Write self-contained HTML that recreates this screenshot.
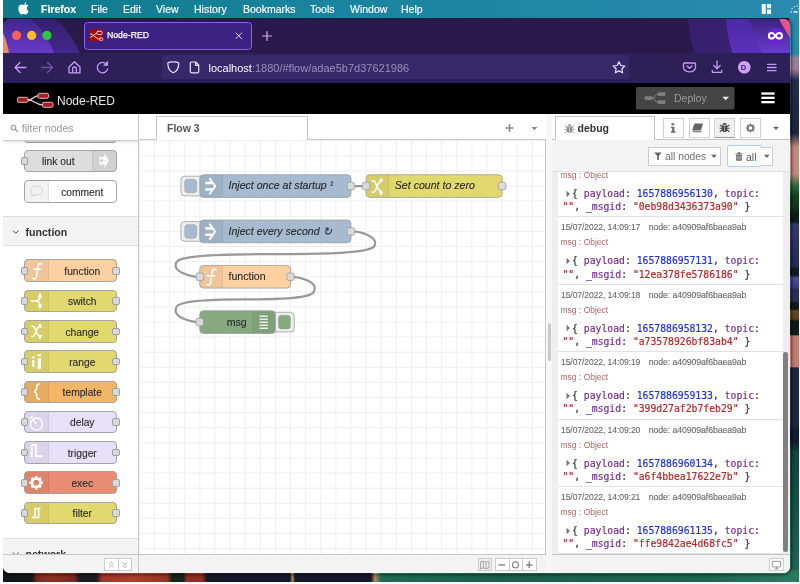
<!DOCTYPE html>
<html>
<head>
<meta charset="utf-8">
<title>Node-RED</title>
<style>
*{box-sizing:border-box;margin:0;padding:0}
html,body{width:800px;height:584px;overflow:hidden;background:#fff}
body{font-family:"Liberation Sans","Helvetica Neue",Arial,sans-serif;position:relative;color:#333}
.abs{position:absolute}
#desk{will-change:transform;position:absolute;left:3px;top:0;width:795.600px;height:581.500px;overflow:hidden;background:#14252b}
#menubar{position:absolute;left:0;top:0;width:796px;height:18.300px;background:linear-gradient(90deg,#0f798b 0%,#19849d 40%,#2288a7 75%,#2b8ab0 100%);color:#fff;font-size:10.500px;line-height:18px;-webkit-text-stroke:0.150px #fff;white-space:nowrap}
#menubar span{position:absolute;top:0}
#win{position:absolute;left:0;top:19px;width:786.800px;height:554.200px;border-radius:8px 6px 7px 7px;overflow:hidden;background:#fff}
#tabbar{position:absolute;left:0;top:0;width:787px;height:33.500px;background:#2a1a4b}
#navbar{position:absolute;left:0;top:33.500px;width:787px;height:31.500px;background:#2d1f57}
#urlbar{position:absolute;left:158.500px;top:2.500px;width:467px;height:24px;border-radius:3px;background:#37286a}
#nrhead{position:absolute;left:0;top:64.300px;width:787px;height:30.300px;background:#000}
#palette{position:absolute;left:0;top:94.600px;width:136px;height:440px;background:#fff;border-right:1px solid #c8c8c8;overflow:hidden}
.pnode{position:absolute;left:21px;width:92.500px;height:22.600px;border:1px solid #a3a3a3;border-radius:4px;font-size:10.250px;line-height:20.600px;text-align:center;color:#2c2c2c;-webkit-text-stroke:0.120px currentColor}
.pnode .ic{position:absolute;left:0;top:0;width:23.500px;height:20.600px;background:rgba(0,0,0,0.05);border-right:1px solid rgba(0,0,0,0.06);border-radius:3px 0 0 3px}
.pnode .icr{position:absolute;right:0;top:0;width:23.500px;height:20.600px;background:rgba(0,0,0,0.05);border-left:1px solid rgba(0,0,0,0.06);border-radius:0 3px 3px 0}
.pnode .lbl{position:absolute;left:24px;right:0;top:1.600px;text-align:center}
.pnode .pl,.pnode .pr{position:absolute;top:6.500px;width:7.600px;height:7.600px;border:1px solid #a0a0a0;border-radius:2px;background:#d9d9d9}
.pnode .pl{left:-4.500px}
.pnode .pr{right:-4.500px}
#chart{position:absolute;left:136px;top:121px;width:407px;height:413px;background:#fff;overflow:hidden}
#sidebar{position:absolute;left:549px;top:94px;width:238px;height:459px;background:#f3f3f3}
.dmsg{position:absolute;left:6px;width:225px;height:67.400px;background:#fff;border-bottom:1px solid #e2e2e2}
.dmeta{-webkit-text-stroke:0.100px currentColor;position:absolute;left:3px;top:5px;font-size:8.600px;color:#666;white-space:nowrap;letter-spacing:-0.1px}
.dname{position:absolute;left:2.500px;top:20px;font-size:8.500px;color:#a66;white-space:nowrap}
.dpay{position:absolute;left:4.400px;top:37px;font-family:"DejaVu Sans Mono","Liberation Mono",monospace;font-size:9.75px;line-height:13.2px;white-space:pre;color:#333;-webkit-text-stroke:0.200px currentColor}
.k{color:#792e90}.n{color:#2033d6}.s{color:#b72828}
.sbtn{top:4px;width:21px;height:20px;background:#fff;border:1px solid #d2d2d2}
</style>
</head>
<body>
<div id="desk">
<div id="rstrip" class="abs" style="left:786px;top:18px;width:10px;height:564px;background:linear-gradient(180deg,#2a8ba8 1.0px,#2a8ba8 36.0px,#9b8092 40.0px,#9b8092 51.0px,#252c52 62.0px,#1c2540 115.0px,#c08a78 129.0px,#c08a78 156.0px,#2a6a34 168.0px,#124020 178.0px,#0f3018 192.0px,#0c1c18 196.0px,#0c1c18 204.0px,#323a6e 206.0px,#242a54 248.0px,#0f1a22 251.0px,#0f1a22 257.0px,#4a4c98 260.0px,#3a3c80 269.0px,#2a2d5a 272.0px,#2a2d5a 283.0px,#0c1c14 285.0px,#0c1c14 291.0px,#6a4824 293.0px,#5a4020 301.0px,#0c1a18 303.0px,#0c1a18 316.5px,#c47a6c 318.0px,#c47a6c 348.5px,#1c2744 350.0px,#1c2744 406.0px,#101c30 412.0px,#101c30 424.0px,#134540 434.0px,#155045 482.0px,#22664f 555.0px,#2a7a60 564.0px)"></div>
<div id="bstrip" class="abs" style="left:0;top:570px;width:796px;height:12px;background:linear-gradient(90deg,#15151c 0.0px,#15151c 29.0px,#7a2a1e 34.0px,#8f3324 47.0px,#7a2a1e 71.0px,#1a1a20 77.0px,#1a1a20 93.0px,#a03826 99.0px,#ab3e2a 132.0px,#98351f 164.0px,#16241c 169.0px,#16241c 180.0px,#8f2e22 184.0px,#8f2e22 199.0px,#17172a 204.0px,#17172a 287.0px,#b08060 289.5px,#17172a 292.0px,#17172a 368.0px,#b08868 372.0px,#1f6b52 378.0px,#1c5f4b 497.0px,#1d6650 697.0px,#2a7a60 796.0px)"></div>
<div class="abs" style="left:-1px;top:18px;width:789px;height:555.500px;border-radius:8px;box-shadow:0 0 3px 1px rgba(0,0,0,0.55)"></div>
<div id="menubar">
<svg class="abs" style="left:0;top:0" width="797" height="19" viewBox="0 0 797 19">
<g fill="#fff">
<path d="M21.400 4.600 C21.300 3.500 22.200 2.500 23.200 2.300 C23.400 3.500 22.400 4.600 21.400 4.600 Z"/>
<path d="M23.900 8.100 C23.900 6.900 24.500 6.200 25.200 5.700 C24.600 4.900 23.700 4.600 22.900 4.600 C21.900 4.600 21.400 5.100 20.700 5.100 C20 5.100 19.300 4.600 18.500 4.600 C16.900 4.600 15.300 6 15.300 8.500 C15.300 11.200 17.100 14.400 18.600 14.400 C19.300 14.400 19.700 13.900 20.700 13.900 C21.700 13.900 21.900 14.400 22.800 14.400 C23.900 14.400 25 12.600 25.500 11.100 C24.500 10.700 23.900 9.500 23.900 8.100 Z"/>
<path d="M759.500 4 H762.700 V14 H759.500 Q758.700 14 758.700 13.200 V4.800 Q758.700 4 759.500 4 Z M763.900 4 H767.300 Q768.100 4 768.100 4.800 V8.300 H763.900 Z M763.900 9.500 H768.100 V13.200 Q768.100 14 767.300 14 H763.900 Z"/>
<g opacity="0.9"><rect x="788.500" y="8" width="1.200" height="1.200"/><rect x="790.800" y="6" width="1.200" height="1.200"/><rect x="793.500" y="5.500" width="1.200" height="1.200"/><rect x="795.500" y="8" width="1.200" height="1.200"/><rect x="787.500" y="11.200" width="1.200" height="1.500"/><rect x="790.500" y="11.200" width="4" height="1.500"/><rect x="795.800" y="11.200" width="1.200" height="1.500"/></g>
</g>
</svg>
<span style="left:38px;font-weight:bold">Firefox</span>
<span style="left:88px">File</span>
<span style="left:120px">Edit</span>
<span style="left:153px">View</span>
<span style="left:191px">History</span>
<span style="left:240px">Bookmarks</span>
<span style="left:307px">Tools</span>
<span style="left:347px">Window</span>
<span style="left:398px">Help</span>
</div>
<div id="win">
<div id="tabbar">
<svg class="abs" style="left:0;top:0" width="787" height="34" viewBox="0 0 787 34">
<defs>
<linearGradient id="lg1" x1="0" y1="0" x2="0" y2="1"><stop offset="0" stop-color="#40268a"/><stop offset="1" stop-color="#6a3aca"/></linearGradient>
<linearGradient id="lg2" x1="0" y1="0" x2="0" y2="1"><stop offset="0" stop-color="#34206c"/><stop offset="1" stop-color="#42288c"/></linearGradient>
<linearGradient id="lg3" x1="0" y1="0" x2="0" y2="1"><stop offset="0" stop-color="#4c2aa8"/><stop offset="1" stop-color="#5b31bb"/></linearGradient>
<linearGradient id="lg4" x1="0" y1="0" x2="0" y2="1"><stop offset="0" stop-color="#3c2380"/><stop offset="1" stop-color="#6c3ad0"/></linearGradient>
</defs>
<rect width="787" height="34" fill="#2a1a4c"/>
<path d="M0 0 H52 C62 8 72 22 77 34 H0 Z" fill="url(#lg2)"/>
<path d="M0 0 H28 C36 8 46 20 51 34 H0 Z" fill="url(#lg1)"/>
<path d="M0 14 C3 20 5 28 6 34 H0 Z" fill="#f08a6a"/>
<path d="M685 0 C686 12 688 24 691.500 34 H787 V0 Z" fill="#37206f"/>
<path d="M723 0 C724 12 726 24 729.600 34 H787 V0 Z" fill="url(#lg3)"/>
<path d="M746 0 C749 12 754 24 759.700 34 H787 V0 Z" fill="url(#lg4)"/>
<path d="M776 0 H787 V19 C783 12 779 6 776 0 Z" fill="#ee4f8d"/>
<circle cx="13.600" cy="16.400" r="4.600" fill="#fe5f57"/>
<circle cx="28.700" cy="16.400" r="4.600" fill="#febc2e"/>
<circle cx="43.900" cy="16.400" r="4.600" fill="#28c840"/>
<rect x="81.5" y="3.5" width="167" height="27" rx="3" fill="#3c2183" stroke="#8e5fe6" stroke-width="1"/>
<rect x="86.800" y="10.250" width="12.600" height="12" fill="#a80a0a"/>
<g stroke="#f3dada" stroke-width="1" fill="none" stroke-linecap="round">
<path d="M87.500 14.800 C90.500 15.500 92 18.500 95 19.700 L96.500 20.200 M87.500 18.300 C90.500 17.600 91.500 14.600 94 14"/>
<rect x="94" y="12.300" width="5" height="3.300" rx="1" fill="#a80a0a" stroke-width="0.900"/><rect x="96.500" y="19" width="3.200" height="2.400" rx="0.800" fill="#a80a0a" stroke-width="0.800"/>
</g>
<g stroke="#e6d9fb" stroke-width="1" stroke-linecap="round"><path d="M233 14 L238.5 19.5 M238.5 14 L233 19.5"/></g>
<g stroke="#d3a8f8" stroke-width="1.2" stroke-linecap="round"><path d="M259.5 17 H268.5 M264 12.5 V21.5"/></g>
<circle cx="772.400" cy="16.800" r="8" fill="#6e20dc"/>
<path d="M772.5 16.500 C771 14.300 769.800 13.700 768.700 13.700 C767.100 13.700 766 14.900 766 16.500 C766 18.100 767.100 19.300 768.700 19.300 C769.800 19.300 771 18.700 772.500 16.500 C774 14.300 775.200 13.700 776.300 13.700 C777.900 13.700 779 14.900 779 16.500 C779 18.100 777.900 19.300 776.300 19.300 C775.200 19.300 774 18.700 772.500 16.500 Z" fill="none" stroke="#fff" stroke-width="2.100" transform="translate(-0.1,0.3)"/>
</svg>
<div class="abs" style="left:104px;top:10px;font-size:8.700px;-webkit-text-stroke:0.250px #fff;line-height:13px;color:#fff;white-space:nowrap">Node-RED</div>
</div>
<div id="navbar"><div id="urlbar"></div>
<svg class="abs" style="left:0;top:-0.800px" width="787" height="31" viewBox="0 0 787 31" fill="none" stroke-linecap="round" stroke-linejoin="round">
<g stroke="#c79bf5" stroke-width="1.3">
<path d="M23 15.500 H12.500 M17 10.500 L12 15.500 L17 20.500"/>
<path d="M38.500 15.500 H49 M44.500 10.500 L49.500 15.500 L44.500 20.500" stroke="#6f55a8"/>
<path d="M66 15 L71.500 9.800 L77 15 V20.800 H66 Z M69.700 20.800 V16.300 Q69.700 15 71.500 15 Q73.300 15 73.300 16.300 V20.800"/>
<path d="M103.800 12.600 A5.200 5.200 0 1 0 104.600 16.800"/>
<path d="M104.700 9.600 V13.400 H100.900 Z" fill="#c79bf5" stroke-width="0.8"/>
</g>
<g stroke="#ece4fb" stroke-width="1.2">
<path d="M170.300 10 C172 10 173.500 9.600 175.800 11 C175.800 16 174.500 19 170.300 20.800 C166.100 19 164.800 16 164.800 11 C167.100 9.600 168.600 10 170.300 10 Z"/>
<path d="M187.300 11.200 Q187.300 10 188.500 10 H192.700 L195.700 13 V19.600 Q195.700 20.800 194.500 20.800 H188.500 Q187.300 20.800 187.300 19.600 Z M192.500 10.200 V13.300 H195.500"/>
<path d="M616 9.800 L617.800 13.500 L621.800 14 L618.900 16.800 L619.600 20.800 L616 18.900 L612.400 20.800 L613.100 16.800 L610.200 14 L614.200 13.500 Z"/>
</g>
<g stroke="#c79bf5" stroke-width="1.3">
<path d="M681.500 11 H691.500 Q692.500 11 692.500 12 V15 Q692.500 19.800 686.500 19.800 Q680.500 19.800 680.500 15 V12 Q680.500 11 681.500 11 Z M684 14 L686.500 16.300 L689 14"/>
<path d="M714 9 V16.500 M710.800 13.500 L714 16.700 L717.200 13.500 M709.300 18.500 V20.300 H718.700 V18.500"/>
<path d="M764.500 12.300 H773 M764.500 15.500 H773 M764.500 18.700 H773"/>
</g>
<circle cx="741.300" cy="15.300" r="6.300" fill="#d29ff7"/>
</svg>
<div class="abs" style="left:737.700px;top:10.200px;font-size:7.500px;line-height:9px;font-weight:bold;color:#2d1f57">D</div>
<div class="abs" style="left:205.500px;top:9px;font-size:11px;line-height:13px;color:#fbfbfe;white-space:nowrap">localhost<span style="color:#9d90bd">:1880/#flow/adae5b7d37621986</span></div>
</div>
<div id="nrhead">
<svg class="abs" style="left:0;top:0" width="787" height="30" viewBox="0 0 787 30">
<g transform="translate(1,1.300)"><g fill="none" stroke="#e6d6d6" stroke-width="1.300">
<path d="M24 15.500 C30 15.500 29 11.500 34 11.500"/>
<path d="M24 15.500 C31 15.500 31 20.500 38.500 20.500"/>
</g>
<g fill="#a81e22" stroke="#ecc8c8" stroke-width="0.900">
<rect x="13.500" y="13" width="10.500" height="5" rx="1.500"/>
<rect x="34" y="9" width="10.500" height="5" rx="1.500"/>
<rect x="38.500" y="18" width="10.500" height="5" rx="1.500"/>
</g></g>
<rect x="633" y="4" width="98.500" height="22.500" rx="1.500" fill="#454545"/>
<g fill="#7d7d7d">
<rect x="641.500" y="13.300" width="8" height="3.600" rx="0.800"/>
<rect x="654.500" y="9.300" width="8" height="3.600" rx="0.800"/>
<rect x="654.500" y="17.300" width="8" height="3.600" rx="0.800"/>
</g>
<path d="M649.500 15.100 C653 15.100 651 11.100 654.500 11.100 M649.500 15.100 C653 15.100 651 19.100 654.500 19.100" fill="none" stroke="#7d7d7d" stroke-width="1"/>
<path d="M719.300 13.800 H726 L722.650 17.300 Z" fill="#eee"/>
<g fill="#fff"><rect x="758.300" y="9.400" width="13.300" height="2.300"/><rect x="758.300" y="13.700" width="13.300" height="2.300"/><rect x="758.300" y="18" width="13.300" height="2.300"/></g>
</svg>
<div class="abs" style="left:54px;top:9.300px;font-size:12px;line-height:16px;color:#e6e6e6;white-space:nowrap">Node-RED</div>
<div class="abs" style="left:671px;top:8px;font-size:10.500px;line-height:14px;color:#9a9a9a;white-space:nowrap">Deploy</div>
</div>
<!--PAL--><div id="palette">
<div class="pnode" style="top:6.4px;background:#ddd"></div>
<div class="pnode" style="top:36.1px;background:#ddd"><div class="icr"><svg width="22" height="20" viewBox="0 0 22 20" style="position:absolute;left:0;top:0.300px"><path d="M6.500 5.800 H11.400 V2.300 L16 9.600 L11.400 17 V13.400 H6.500 Z" fill="#fff" opacity="0.950"/><circle cx="8.600" cy="9.600" r="1.700" fill="#d2d2d2"/><path d="M10.300 9.600 H14" stroke="#d2d2d2" stroke-width="0.500"/></svg></div><div class="lbl" style="left:0;right:24px">link out</div><div class="pl"></div></div>
<div class="pnode" style="top:66.6px;background:#fff"><div class="ic"><svg width="22" height="20" viewBox="0 0 22 20" style="position:absolute;left:0;top:0.300px"><path d="M5.500 9.500 C5.500 6.500 8.500 5 11.500 5 C14.500 5 17.500 6.500 17.500 9.500 C17.500 12.500 14.500 14 11.500 14 C10.500 14 9.800 13.900 9.100 13.700 C8.500 14.800 7.500 15.500 6.200 15.700 C6.800 15 7.100 14 7 12.800 C6 12 5.500 10.800 5.500 9.500 Z" fill="none" stroke="#ccc" stroke-width="0.900"/></svg></div><div class="lbl">comment</div></div>
<div class="pnode" style="top:145.9px;background:#fdd0a2"><div class="ic"><svg width="22" height="20" viewBox="0 0 22 20" style="position:absolute;left:0;top:0.300px"><path d="M16.800 3.100 C14.500 1.700 13.300 2.900 13 5 L11.600 15.500 C11.200 18 9.800 18.600 7.500 17.400 M9.200 8.300 H15.400" fill="none" stroke="#fff" stroke-width="1.500" stroke-linecap="round"/></svg></div><div class="lbl">function</div><div class="pl"></div><div class="pr"></div></div>
<div class="pnode" style="top:176.18px;background:#e2d96e"><div class="ic"><svg width="22" height="20" viewBox="0 0 22 20" style="position:absolute;left:0;top:0.300px"><g fill="none" stroke="#fff" stroke-width="1.600"><path d="M6 10 H9.500 C12.500 10 15 8.500 15 5.300 M9.500 10 C12.500 10 15 11.500 15 14.500"/></g><path d="M12.600 6.200 L15 1.500 L17.400 6.200 Z M12.600 13.800 L15 18.500 L17.400 13.800 Z" fill="#fff"/></svg></div><div class="lbl">switch</div><div class="pl"></div><div class="pr"></div></div>
<div class="pnode" style="top:206.46px;background:#e2d96e"><div class="ic"><svg width="22" height="20" viewBox="0 0 22 20" style="position:absolute;left:0;top:0.300px"><g fill="none" stroke="#fff" stroke-width="1.500"><path d="M6.300 5.200 H7.500 C11.500 5.200 10.500 15 15 14.800 M6.300 15.400 H7.500 C11.500 15.400 10.500 5.500 15 5.800"/></g><path d="M12.600 6.500 L15 1.800 L17.400 6.500 Z M12.600 14.100 L15 18.800 L17.400 14.100 Z" fill="#fff"/></svg></div><div class="lbl">change</div><div class="pl"></div><div class="pr"></div></div>
<div class="pnode" style="top:236.74px;background:#e2d96e"><div class="ic"><svg width="22" height="20" viewBox="0 0 22 20" style="position:absolute;left:0;top:0.300px"><g fill="#fff"><rect x="7.200" y="4.500" width="2.300" height="2"/><rect x="7.200" y="8" width="2.300" height="7"/><rect x="12.700" y="2.200" width="3.200" height="2.300"/><rect x="12.700" y="6.300" width="3.200" height="10.500"/></g><path d="M9.500 4.500 L12.700 2.500 M9.500 15 L12.700 16.800" stroke="#fff" stroke-width="0.600" stroke-dasharray="1 1" opacity="0.800"/></svg></div><div class="lbl">range</div><div class="pl"></div><div class="pr"></div></div>
<div class="pnode" style="top:267.02px;background:#f3b567"><div class="ic"><svg width="22" height="20" viewBox="0 0 22 20" style="position:absolute;left:0;top:0.300px"><path d="M14.800 1.800 C12 1.800 11.700 3 11.700 5 C11.700 7.800 11.400 9 9 9.500 C11.400 10 11.700 11.200 11.700 14 C11.700 16 12 17.200 14.800 17.200" fill="none" stroke="#fff" stroke-width="1.600"/></svg></div><div class="lbl">template</div><div class="pl"></div><div class="pr"></div></div>
<div class="pnode" style="top:297.3px;background:#e6e0f8"><div class="ic"><svg width="22" height="20" viewBox="0 0 22 20" style="position:absolute;left:0;top:0.300px"><g fill="none" stroke="#fff" stroke-width="1.300" opacity="0.900"><circle cx="11.500" cy="12" r="6"/><path d="M11.500 12 L8 8 M5.300 6.300 L7.800 4" stroke-linecap="round"/></g></svg></div><div class="lbl">delay</div><div class="pl"></div><div class="pr"></div></div>
<div class="pnode" style="top:327.58px;background:#e6e0f8"><div class="ic"><svg width="22" height="20" viewBox="0 0 22 20" style="position:absolute;left:0;top:0.300px"><path d="M6.700 15.500 V3 H11 V14.300 H17.400" fill="none" stroke="#fff" stroke-width="1.900"/></svg></div><div class="lbl">trigger</div><div class="pl"></div><div class="pr"></div></div>
<div class="pnode" style="top:357.86px;background:#e88d71"><div class="ic"><svg width="22" height="20" viewBox="0 0 22 20" style="position:absolute;left:0;top:0.300px"><g><circle cx="11.200" cy="9.700" r="4.200" fill="none" stroke="#fff" stroke-width="2.700"/><g stroke="#fff" stroke-width="2.600"><path d="M11.200 3 V5.200 M11.200 14.200 V16.400 M4.500 9.700 H6.700 M15.700 9.700 H17.900 M6.460 4.960 L8 6.500 M14.400 12.900 L15.940 14.440 M6.460 14.440 L8 12.900 M14.400 6.500 L15.940 4.960"/></g></g></svg></div><div class="lbl">exec</div><div class="pl"></div><div class="pr"></div></div>
<div class="pnode" style="top:388.14px;background:#e2d96e"><div class="ic"><svg width="22" height="20" viewBox="0 0 22 20" style="position:absolute;left:0;top:0.300px"><path d="M6.800 14.500 H13.700 V5.500 H15.500 M13.700 5.500 H10 V14.500" fill="none" stroke="#fff" stroke-width="1.500"/></svg></div><div class="lbl">filter</div><div class="pl"></div><div class="pr"></div></div>
<div class="abs" style="left:0;top:102.4px;width:135px;height:30.500px;background:#f3f3f3;border-top:1px solid #ddd;border-bottom:1px solid #ddd"></div>
<svg class="abs" style="left:8px;top:114.4px" width="10" height="8" viewBox="0 0 10 8"><path d="M2 2.500 L4.800 5.300 L7.600 2.500" fill="none" stroke="#444" stroke-width="1"/></svg>
<div class="abs" style="left:22.500px;top:111.4px;font-size:10.600px;line-height:14px;font-weight:bold;color:#333">function</div>
<div class="abs" style="left:0;top:424.4px;width:135px;height:30.500px;background:#f3f3f3;border-top:1px solid #ddd;border-bottom:1px solid #ddd"></div>
<svg class="abs" style="left:8px;top:436.4px" width="10" height="8" viewBox="0 0 10 8"><path d="M2 2.500 L4.800 5.300 L7.600 2.500" fill="none" stroke="#444" stroke-width="1"/></svg>
<div class="abs" style="left:22.500px;top:433.4px;font-size:10.600px;line-height:14px;font-weight:bold;color:#333">network</div>
<div class="abs" style="left:0;top:0;width:135px;height:27px;background:#fff;border-bottom:1px solid #ccc;box-shadow:0 1px 3px rgba(0,0,0,0.15)"></div>
<svg class="abs" style="left:6.500px;top:10.200px" width="9" height="9" viewBox="0 0 9 9"><circle cx="3.500" cy="3.500" r="2.300" fill="none" stroke="#999" stroke-width="1.100"/><path d="M5.300 5.300 L7.600 7.600" stroke="#999" stroke-width="1.300" stroke-linecap="round"/></svg>
<div class="abs" style="left:18.800px;top:7.700px;font-size:10.600px;line-height:14px;color:#999">filter nodes</div>
</div>
<div id="palfoot" class="abs" style="left:0;top:534.600px;width:136px;height:21px;background:#f3f3f3;border-top:1px solid #c6c6c6;border-right:1px solid #c6c6c6">
<div class="abs" style="left:101.400px;top:3px;width:14.500px;height:13.800px;background:#fff;border:1px solid #ccc"></div>
<div class="abs" style="left:114.900px;top:3px;width:14.500px;height:13.800px;background:#fff;border:1px solid #ccc"></div>
<svg class="abs" style="left:101.400px;top:3px" width="28" height="14" viewBox="0 0 28 14"><g fill="none" stroke="#999" stroke-width="0.800"><path d="M5 6.500 L7.300 4.300 L9.600 6.500 M5 9.500 L7.300 7.300 L9.600 9.500 M18.500 4.500 L20.800 6.700 L23.100 4.500 M18.500 7.500 L20.800 9.700 L23.100 7.500"/></g></svg>
</div>
<!--/PAL-->
<div id="ws" class="abs" style="left:136px;top:94.600px;width:407px;height:459px;background:#fff">
<div class="abs" style="left:0;top:0;width:407px;height:26.400px;background:#fff;border-bottom:1px solid #c6c6c6"></div>
<div class="abs" style="left:17.300px;top:2px;width:152px;height:24.400px;background:#fff;border:1px solid #c6c6c6;border-bottom:none"></div>
<div class="abs" style="left:28px;top:7.500px;font-size:10.500px;line-height:14px;font-weight:bold;color:#555;white-space:nowrap">Flow 3</div>
<svg class="abs" style="left:360px;top:5px" width="45" height="18" viewBox="0 0 45 18"><path d="M6.500 9 H14.500 M10.500 5 V13" stroke="#888" stroke-width="1.500"/><path d="M32.500 8 H38.500 L35.500 11.200 Z" fill="#888"/></svg>
<div id="chart" class="abs" style="left:0;top:26.400px;width:406px;height:414px;overflow:hidden;background-color:#fff;background-image:linear-gradient(90deg,#eee 1px,transparent 1px),linear-gradient(180deg,#eee 1px,transparent 1px);background-size:15.120px 15.120px;background-position:0px 0.200px">
<!--CH--><svg class="abs" style="left:0;top:0" width="406" height="413" viewBox="0 0 406 413" font-family="'Liberation Sans',Arial,sans-serif"><g transform="translate(0.300,0.700) scale(0.756)"><path d="M 280 60 C 290 60 290 60 300 60" fill="none" stroke="#fff" stroke-opacity="0.4" stroke-width="5"/><path d="M 280 60 C 290 60 290 60 300 60" fill="none" stroke="#999" stroke-width="3" stroke-linecap="round"/><path d="M 280 120 C 296 120 312 127.500 312 135 S 312 150 180 150 S 48 157.500 48 165 S 64 180 80 180" fill="none" stroke="#fff" stroke-opacity="0.4" stroke-width="5"/><path d="M 280 120 C 296 120 312 127.500 312 135 S 312 150 180 150 S 48 157.500 48 165 S 64 180 80 180" fill="none" stroke="#999" stroke-width="3" stroke-linecap="round"/><path d="M 200 180 C 216 180 232 187.500 232 195 S 232 210 140 210 S 48 217.500 48 225 S 64 240 80 240" fill="none" stroke="#fff" stroke-opacity="0.4" stroke-width="5"/><path d="M 200 180 C 216 180 232 187.500 232 195 S 232 210 140 210 S 48 217.500 48 225 S 64 240 80 240" fill="none" stroke="#999" stroke-width="3" stroke-linecap="round"/><g transform="translate(80.0,45)"><g transform="translate(-25,2)"><rect width="32" height="26" rx="5" ry="5" fill="#eee" stroke="#999"/><rect x="5" y="4" width="16" height="18" rx="4" ry="4" fill="#a6bbcf" stroke="#999" stroke-opacity="0.6"/></g><rect width="200" height="30" rx="5" ry="5" fill="#a6bbcf" stroke="#999" stroke-width="1"/><path d="M30 0.500 H5 Q0.500 0.500 0.500 5 V25 Q0.500 29.500 5 29.500 H30 Z" fill="rgba(0,0,0,0.05)"/><path d="M30 1 V29" stroke="rgba(0,0,0,0.1)"/><path d="M12.700 4.500 L20.300 15.200 L12.700 25.900" fill="none" stroke="#fff" stroke-width="2.600" stroke-linejoin="miter"/><g fill="#fff"><rect x="7.300" y="9.300" width="9" height="3.400"/><rect x="7.300" y="17.700" width="9" height="3.400"/></g><text x="38" y="19.500" font-size="14" fill="#2a2a2a" stroke="#2a2a2a" stroke-width="0.150" font-style="italic">Inject once at startup ¹</text><rect x="195" y="10" width="10" height="10" rx="3" ry="3" fill="#d9d9d9" stroke="#999" stroke-width="1"/></g><g transform="translate(300.0,45)"><rect width="180" height="30" rx="5" ry="5" fill="#e2d96e" stroke="#999" stroke-width="1"/><path d="M30 0.500 H5 Q0.500 0.500 0.500 5 V25 Q0.500 29.500 5 29.500 H30 Z" fill="rgba(0,0,0,0.05)"/><path d="M30 1 V29" stroke="rgba(0,0,0,0.1)"/><g fill="none" stroke="#fff" stroke-width="2"><path d="M7.400 8 H9 C14.500 8 13.500 21 19.800 22 V23 M7.400 23.300 H9 C14.500 23.300 13.500 10 19.800 9 V8"/></g><path d="M16.900 8.500 L19.800 3.300 L22.700 8.500 Z M16.900 22.500 L19.800 27.700 L22.700 22.500 Z" fill="#fff"/><text x="38" y="19.500" font-size="14" fill="#2a2a2a" stroke="#2a2a2a" stroke-width="0.150" font-style="italic">Set count to zero</text><rect x="-5" y="10" width="10" height="10" rx="3" ry="3" fill="#d9d9d9" stroke="#999" stroke-width="1"/><rect x="175" y="10" width="10" height="10" rx="3" ry="3" fill="#d9d9d9" stroke="#999" stroke-width="1"/></g><g transform="translate(80.0,105)"><g transform="translate(-25,2)"><rect width="32" height="26" rx="5" ry="5" fill="#eee" stroke="#999"/><rect x="5" y="4" width="16" height="18" rx="4" ry="4" fill="#a6bbcf" stroke="#999" stroke-opacity="0.6"/></g><rect width="200" height="30" rx="5" ry="5" fill="#a6bbcf" stroke="#999" stroke-width="1"/><path d="M30 0.500 H5 Q0.500 0.500 0.500 5 V25 Q0.500 29.500 5 29.500 H30 Z" fill="rgba(0,0,0,0.05)"/><path d="M30 1 V29" stroke="rgba(0,0,0,0.1)"/><path d="M12.700 4.500 L20.300 15.200 L12.700 25.900" fill="none" stroke="#fff" stroke-width="2.600" stroke-linejoin="miter"/><g fill="#fff"><rect x="7.300" y="9.300" width="9" height="3.400"/><rect x="7.300" y="17.700" width="9" height="3.400"/></g><text x="38" y="19.500" font-size="14" fill="#2a2a2a" stroke="#2a2a2a" stroke-width="0.150" font-style="italic">Inject every second ↻</text><rect x="195" y="10" width="10" height="10" rx="3" ry="3" fill="#d9d9d9" stroke="#999" stroke-width="1"/></g><g transform="translate(80.0,165)"><rect width="120" height="30" rx="5" ry="5" fill="#fdd0a2" stroke="#999" stroke-width="1"/><path d="M30 0.500 H5 Q0.500 0.500 0.500 5 V25 Q0.500 29.500 5 29.500 H30 Z" fill="rgba(0,0,0,0.05)"/><path d="M30 1 V29" stroke="rgba(0,0,0,0.1)"/><path d="M21.500 5.800 C18.500 4 16.800 5.500 16.400 8.500 L14.400 22.500 C14 25.500 12.200 26.700 9.300 25 M10 13.500 H19.800" fill="none" stroke="#fff" stroke-width="2" stroke-linecap="round"/><text x="38" y="19.500" font-size="14" fill="#2a2a2a" stroke="#2a2a2a" stroke-width="0.150">function</text><rect x="-5" y="10" width="10" height="10" rx="3" ry="3" fill="#d9d9d9" stroke="#999" stroke-width="1"/><rect x="115" y="10" width="10" height="10" rx="3" ry="3" fill="#d9d9d9" stroke="#999" stroke-width="1"/></g><g transform="translate(80.0,225)"><g transform="translate(93,2)"><rect width="32" height="26" rx="5" ry="5" fill="#eee" stroke="#999"/><rect x="11" y="4" width="16" height="18" rx="4" ry="4" fill="#87a980" stroke="#999" stroke-opacity="0.6"/></g><rect width="100" height="30" rx="5" ry="5" fill="#87a980" stroke="#999" stroke-width="1"/><g transform="translate(70,0)"><path d="M0 0.500 H25 Q29.500 0.500 29.500 5 V25 Q29.500 29.500 25 29.500 H0 Z" fill="rgba(0,0,0,0.05)"/><path d="M0 1 V29" stroke="rgba(0,0,0,0.1)"/><g fill="#fff"><rect x="9" y="6.300" width="11" height="1.600"/><rect x="9" y="10.300" width="11" height="1.600"/><rect x="9" y="14.300" width="11" height="1.600"/><rect x="9" y="18.300" width="11" height="1.600"/><rect x="9" y="22.300" width="11" height="1.600"/></g></g><text x="62" y="19.500" text-anchor="end" font-size="14" fill="#2a2a2a" stroke="#2a2a2a" stroke-width="0.150">msg</text><rect x="-5" y="10" width="10" height="10" rx="3" ry="3" fill="#d9d9d9" stroke="#999" stroke-width="1"/></g></g></svg><!--/CH-->
</div>
<div class="abs" style="left:406px;top:26.400px;width:1px;height:414px;background:#c6c6c6"></div>
<div class="abs" style="left:0;top:440px;width:407px;height:21px;background:#f3f3f3;border-top:1px solid #c6c6c6">
<div class="abs" style="left:338.500px;top:3px;width:14.500px;height:13.500px;background:#eee;border:1px solid #ccc"></div>
<div class="abs" style="left:356px;top:3px;width:14.500px;height:13.500px;background:#fff;border:1px solid #ccc"></div>
<div class="abs" style="left:369.500px;top:3px;width:14.500px;height:13.500px;background:#fff;border:1px solid #ccc"></div>
<div class="abs" style="left:383px;top:3px;width:14.500px;height:13.500px;background:#fff;border:1px solid #ccc"></div>
<svg class="abs" style="left:338px;top:3px" width="60" height="14" viewBox="0 0 60 14"><g fill="none" stroke="#888">
<path d="M3.500 4 L6.300 3.300 L9.100 4 L11.900 3.300 V10 L9.100 10.700 L6.300 10 L3.500 10.700 Z M6.300 3.300 V10 M9.100 4 V10.700" stroke-width="0.700"/>
<path d="M21.500 6.900 H28" stroke-width="1.500"/>
<circle cx="38.500" cy="6.900" r="3" stroke-width="1.100"/>
<path d="M49 6.900 H55.500 M52.250 3.600 V10.200" stroke-width="1.500"/></g></svg>
</div>
</div>
<div id="sep" class="abs" style="left:543px;top:94.600px;width:6px;height:462px;background:#f7f7f7"><div class="abs" style="left:1.500px;top:209px;width:3px;height:38px;border-radius:1.500px;background:#c9c9c9"></div></div>
<!--SB--><div id="sidebar" class="abs" style="left:549px;top:94.600px;width:238px;height:459px;background:#f3f3f3;overflow:hidden">
<div class="abs" style="left:0;top:0;width:238px;height:26.800px;background:#fff;border-bottom:1px solid #c4c4c4"></div>
<div class="abs" style="left:2.5px;top:2.9px;width:100.500px;height:24.500px;background:#fff;border:1px solid #c4c4c4;border-bottom:none"></div>
<svg class="abs" style="left:12.3px;top:9.6px" width="11" height="11" viewBox="0 0 11 11"><g fill="none" stroke="#888" stroke-width="0.900"><path d="M0.800 3 L3 4.500 M10.200 3 L8 4.500 M0.500 6.300 H3 M10.500 6.300 H8 M0.800 9.800 L3 8 M10.200 9.800 L8 8"/></g><path d="M3.600 2.800 C3.600 0.600 7.400 0.600 7.400 2.800 Z" fill="#888"/><path d="M3 3.600 H8 V7.500 C8 10.800 3 10.800 3 7.500 Z" fill="#888"/><path d="M5.500 4 V9.500" stroke="#fff" stroke-width="0.600"/></svg>
<div class="abs" style="left:25.5px;top:7.9px;font-size:10.500px;line-height:14px;font-weight:bold;color:#333;white-space:nowrap">debug</div>
<div class="abs sbtn" style="left:111.0px"></div>
<div class="abs sbtn" style="left:136.5px"></div>
<div class="abs sbtn" style="left:162.2px;background:#efefef;border-bottom:1.500px solid #999"></div>
<div class="abs sbtn" style="left:188.0px"></div>
<svg class="abs" style="left:111.0px;top:4.0px" width="120" height="20" viewBox="0 0 120 20">
<g fill="#666">
<path d="M8.500 5.200 H11.300 V7.300 H8.500 Z M8 8.800 H11.300 V13.300 H12.500 V14.800 H8 V13.300 H9.200 V10.300 H8 Z"/>
<path d="M31.500 5.500 H40 L38 12.500 H30.500 Q29 12.500 29.500 11 Z M29.700 12.800 Q29.500 14.200 31 14.200 H38.200 L38.600 13.200 H31 Q30.300 13.200 30.500 12.500 Z" />
<path d="M59.500 6.800 C59.500 4.300 63.700 4.300 63.700 6.800 Z M58.900 7.500 H64.300 V11.500 C64.300 15 58.900 15 58.900 11.500 Z" fill="#444"/>
<g fill="none" stroke="#444" stroke-width="1.100"><path d="M56.900 7 L59.100 8.500 M66.300 7 L64.100 8.500 M56.600 10.300 H59.100 M66.600 10.300 H64.100 M56.900 13.800 L59.100 12 M66.300 13.800 L64.100 12"/></g>
</g>
<path d="M61.600 8 V13.500" stroke="#efefef" stroke-width="0.600"/>
<g transform="translate(87.500,10) scale(0.850)"><circle r="3.200" fill="none" stroke="#777" stroke-width="2"/><g stroke="#777" stroke-width="1.700"><path d="M0 -5.300 V-3.500 M0 5.300 V3.500 M-5.300 0 H-3.500 M5.300 0 H3.500 M-3.750 -3.750 L-2.500 -2.500 M3.750 3.750 L2.500 2.500 M-3.750 3.750 L-2.500 2.500 M3.750 -3.750 L2.500 -2.500"/></g></g>
<path d="M110 8.800 H116 L113 12 Z" fill="#666"/>
</svg>
<div id="dlist" class="abs" style="left:0;top:58.4px;width:238px;height:381.600px;overflow:hidden;background:#eee">
<div class="dmsg" style="top:-21.90px">
<div class="dmeta">15/07/2022, 14:09:16<span style="margin-left:8.500px;font-size:8.750px">node: a40909af6baea9ab</span></div>
<div class="dname">msg : Object</div>
<svg class="abs" style="left:8px;top:39.500px" width="5" height="8" viewBox="0 0 5 8"><path d="M0.500 0.800 L4 4 L0.500 7.200 Z" fill="#777"/></svg>
<div class="dpay"><span style="display:inline-block;width:9.700px"></span>{ <span class="k">payload</span>: <span class="n">1657886956130</span>, <span class="k">topic</span>:
<span class="s">""</span>, <span class="k">_msgid</span>: <span class="s">"0eb98d3436373a90"</span> }</div>
</div>
<div class="dmsg" style="top:45.50px">
<div class="dmeta">15/07/2022, 14:09:17<span style="margin-left:8.500px;font-size:8.750px">node: a40909af6baea9ab</span></div>
<div class="dname">msg : Object</div>
<svg class="abs" style="left:8px;top:39.500px" width="5" height="8" viewBox="0 0 5 8"><path d="M0.500 0.800 L4 4 L0.500 7.200 Z" fill="#777"/></svg>
<div class="dpay"><span style="display:inline-block;width:9.700px"></span>{ <span class="k">payload</span>: <span class="n">1657886957131</span>, <span class="k">topic</span>:
<span class="s">""</span>, <span class="k">_msgid</span>: <span class="s">"12ea378fe5786186"</span> }</div>
</div>
<div class="dmsg" style="top:112.90px">
<div class="dmeta">15/07/2022, 14:09:18<span style="margin-left:8.500px;font-size:8.750px">node: a40909af6baea9ab</span></div>
<div class="dname">msg : Object</div>
<svg class="abs" style="left:8px;top:39.500px" width="5" height="8" viewBox="0 0 5 8"><path d="M0.500 0.800 L4 4 L0.500 7.200 Z" fill="#777"/></svg>
<div class="dpay"><span style="display:inline-block;width:9.700px"></span>{ <span class="k">payload</span>: <span class="n">1657886958132</span>, <span class="k">topic</span>:
<span class="s">""</span>, <span class="k">_msgid</span>: <span class="s">"a73578926bf83ab4"</span> }</div>
</div>
<div class="dmsg" style="top:180.30px">
<div class="dmeta">15/07/2022, 14:09:19<span style="margin-left:8.500px;font-size:8.750px">node: a40909af6baea9ab</span></div>
<div class="dname">msg : Object</div>
<svg class="abs" style="left:8px;top:39.500px" width="5" height="8" viewBox="0 0 5 8"><path d="M0.500 0.800 L4 4 L0.500 7.200 Z" fill="#777"/></svg>
<div class="dpay"><span style="display:inline-block;width:9.700px"></span>{ <span class="k">payload</span>: <span class="n">1657886959133</span>, <span class="k">topic</span>:
<span class="s">""</span>, <span class="k">_msgid</span>: <span class="s">"399d27af2b7feb29"</span> }</div>
</div>
<div class="dmsg" style="top:247.70px">
<div class="dmeta">15/07/2022, 14:09:20<span style="margin-left:8.500px;font-size:8.750px">node: a40909af6baea9ab</span></div>
<div class="dname">msg : Object</div>
<svg class="abs" style="left:8px;top:39.500px" width="5" height="8" viewBox="0 0 5 8"><path d="M0.500 0.800 L4 4 L0.500 7.200 Z" fill="#777"/></svg>
<div class="dpay"><span style="display:inline-block;width:9.700px"></span>{ <span class="k">payload</span>: <span class="n">1657886960134</span>, <span class="k">topic</span>:
<span class="s">""</span>, <span class="k">_msgid</span>: <span class="s">"a6f4bbea17622e7b"</span> }</div>
</div>
<div class="dmsg" style="top:315.10px">
<div class="dmeta">15/07/2022, 14:09:21<span style="margin-left:8.500px;font-size:8.750px">node: a40909af6baea9ab</span></div>
<div class="dname">msg : Object</div>
<svg class="abs" style="left:8px;top:39.500px" width="5" height="8" viewBox="0 0 5 8"><path d="M0.500 0.800 L4 4 L0.500 7.200 Z" fill="#777"/></svg>
<div class="dpay"><span style="display:inline-block;width:9.700px"></span>{ <span class="k">payload</span>: <span class="n">1657886961135</span>, <span class="k">topic</span>:
<span class="s">""</span>, <span class="k">_msgid</span>: <span class="s">"ffe9842ae4d68fc5"</span> }</div>
</div>
</div>
<div class="abs" style="left:0;top:26.8px;width:238px;height:31.600px;background:#f3f3f3;border-bottom:1px solid #e4e4e4"></div>
<div class="abs" style="left:96.0px;top:33.4px;width:72.500px;height:18.600px;background:#fff;border:1px solid #ccc"></div>
<div class="abs" style="left:175.0px;top:31.8px;width:35px;height:22px;background:#fff;border:1.500px solid #b0ccee;border-radius:2px"></div>
<div class="abs" style="left:209.4px;top:33.4px;width:11.800px;height:18.600px;background:#fff;border:1px solid #ccc;border-left:none"></div>
<svg class="abs" style="left:96.0px;top:33.4px" width="126" height="19" viewBox="0 0 126 19"><g fill="#666">
<path d="M6.300 5.500 H13.700 L10.900 8.800 V13.300 L9.100 12.200 V8.800 Z"/>
<path d="M63 7.800 H68.800 L65.900 10.900 Z"/>
<path d="M116 7.800 H121.600 L118.800 10.900 Z"/>
<path d="M87.500 6.500 H94.500 V7.600 H87.500 Z M89.700 5.300 H92.300 V6.500 H89.700 Z M88.200 8 H93.800 V13 Q93.800 13.700 93.100 13.700 H88.900 Q88.200 13.700 88.200 13 Z"/></g>
<path d="M89.800 9 V12.500 M91 9 V12.500 M92.200 9 V12.500" stroke="#fff" stroke-width="0.500"/>
</svg>
<div class="abs" style="left:113.0px;top:36.4px;font-size:10.300px;line-height:14px;color:#707070;white-space:nowrap">all nodes</div>
<div class="abs" style="left:194.0px;top:36.4px;font-size:10.500px;line-height:14px;color:#555;white-space:nowrap">all</div>
<div class="abs" style="left:231.0px;top:238.4px;width:4.600px;height:200px;border-radius:2.300px;background:#808080"></div>
</div>
<div id="sbfoot" class="abs" style="left:549px;top:534.600px;width:238px;height:19px;background:#f3f3f3;border-top:1px solid #c6c6c6">
<div class="abs" style="left:217.0px;top:3px;width:14.500px;height:13.500px;background:#fff;border:1px solid #ccc"></div>
<svg class="abs" style="left:217.0px;top:3px" width="15" height="14" viewBox="0 0 15 14"><rect x="3.300" y="3.300" width="8.400" height="5.600" rx="0.600" fill="none" stroke="#888" stroke-width="0.900"/><path d="M5.500 10.800 H9.500 M7.500 9 V10.800" stroke="#888" stroke-width="0.900"/></svg>
</div><!--/SB-->
</div>
</div>
</body>
</html>
